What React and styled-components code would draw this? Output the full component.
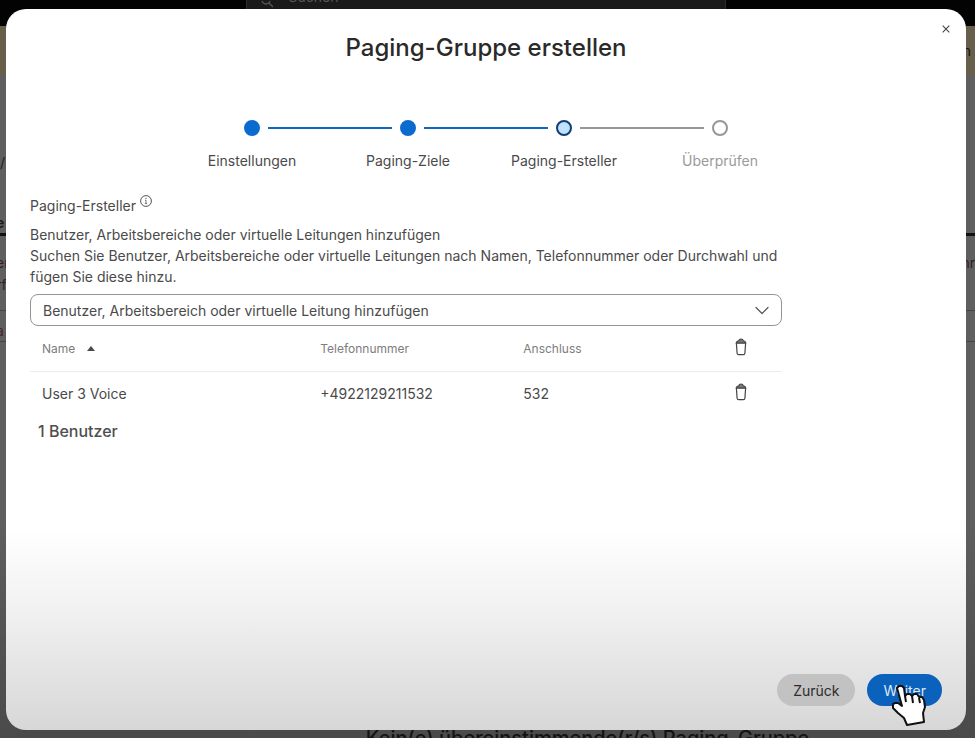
import React, { useState } from "react";
import styled, { createGlobalStyle } from "styled-components";

const GlobalStyle = createGlobalStyle`
  * {
    box-sizing: border-box;
  }
  body {
    margin: 0;
    overflow: hidden;
    background: #5b5b5b;
    color: #4a4a4a;
    font-family: Inter, "Liberation Sans", sans-serif;
    font-size: 14px;
  }
`;

/* page behind the dialog */

const Page = styled.div`
  height: 100vh;
  overflow: hidden;
  display: flex;
  flex-direction: column;
  background: linear-gradient(#5f5f5f 70%, #4a4a4a);
`;

const TopBar = styled.header`
  flex: none;
  height: 26px;
  display: flex;
  justify-content: center;
  background: #030303;
`;

const SearchBox = styled.div`
  width: 480px;
  height: 16px;
  margin-right: 4px;
  padding-left: 14px;
  display: flex;
  align-items: flex-end;
  gap: 16px;
  border: 1px solid #2c2c2c;
  border-top: 0;
  background: #1a1a1a;
  color: #555;
  line-height: 20px;
`;

const SearchText = styled.span`
  height: 28px;
`;

const Banner = styled.div`
  flex: none;
  height: 49px;
  display: flex;
  align-items: center;
  justify-content: flex-end;
  padding-right: 4px;
  background: #675e4c;
  color: #15120c;
`;

const PageLine = styled.div`
  flex: none;
  display: flex;
  align-items: flex-end;
  justify-content: space-between;
  height: ${({ $height }) => $height}px;
  line-height: 20px;
  color: ${({ $color }) => $color || "#1c1c1c"};
  font-weight: ${({ $bold }) => ($bold ? 700 : 400)};
  border-bottom: ${({ $border }) => $border || "0"};
`;

const ScrolledText = styled.span`
  margin-left: -4px;
`;

const EmptyText = styled.p`
  margin: auto 0 -14px;
  padding-left: 200px;
  text-align: center;
  font-size: 20px;
  font-weight: 500;
  line-height: 28px;
  color: #131313;
`;

/* dialog */

const Overlay = styled.div`
  position: fixed;
  inset: 0;
  display: flex;
  padding: 9px 9px 8px 6px;
`;

const Dialog = styled.section`
  flex: 1;
  position: relative;
  display: flex;
  flex-direction: column;
  padding: 25px 24px 24px;
  border-radius: 20px;
  background: linear-gradient(#fff 72%, #f0f0f0 84%, #d7d7d7);
`;

const Title = styled.h1`
  margin: 0;
  text-align: center;
  font-size: 24px;
  font-weight: 450;
  line-height: 28px;
  color: #2a2a2a;
`;

const IconButton = styled.button`
  display: inline-flex;
  padding: 0;
  border: 0;
  background: none;
  color: #444;
  cursor: pointer;
`;

const CloseButton = styled(IconButton)`
  position: absolute;
  top: 16px;
  right: 16px;
`;

const Steps = styled.ol`
  display: flex;
  justify-content: center;
  margin: 58px 0 0;
  padding: 0;
  list-style: none;
`;

const Step = styled.li`
  width: 156px;
  text-align: center;
  line-height: 20px;
  color: ${({ $state }) => ($state === "todo" ? "#9a9a9a" : "#4a4a4a")};
`;

const StepTrack = styled.div`
  display: flex;
  align-items: center;
  gap: 8px;
  margin-bottom: 15px;
`;

const StepLine = styled.span`
  flex: 1;
  height: 2px;
  background: ${({ $color }) => $color};
`;

const dotColors = {
  done: { fill: "#0c6bcf", border: "#0c6bcf" },
  current: { fill: "#bfe2ff", border: "#133c75" },
  todo: { fill: "#fff", border: "#979797" },
};

const StepDot = styled.span`
  width: 16px;
  height: 16px;
  border-radius: 50%;
  border: 2px solid ${({ $state }) => dotColors[$state].border};
  background: ${({ $state }) => dotColors[$state].fill};
`;

const Content = styled.div`
  flex: 1;
  width: 100%;
  max-width: 752px;
`;

const SectionTitle = styled.h2`
  display: flex;
  gap: 4px;
  margin: 24px 0 7px;
  font-size: 14px;
  font-weight: 400;
  line-height: 22px;
`;

const Label = styled.label`
  display: block;
  line-height: 21px;
`;

const Hint = styled.p`
  margin: 0 0 7px;
  line-height: 21px;
`;

const SelectWrap = styled.div`
  display: grid;
  align-items: center;
  margin-bottom: 1px;

  > * {
    grid-area: 1 / 1;
  }
  > svg {
    justify-self: end;
    margin-right: 12px;
    pointer-events: none;
  }
`;

const Select = styled.select`
  appearance: none;
  width: 100%;
  height: 32px;
  padding: 0 40px 0 12px;
  border: 1px solid #949494;
  border-radius: 8px;
  background: #fff;
  color: #4a4a4a;
  font: inherit;
`;

const Table = styled.table`
  width: 100%;
  table-layout: fixed;
  border-collapse: collapse;
  text-align: left;

  th,
  td {
    height: 44px;
    padding: 0 12px;
    font-weight: 400;
  }
  th {
    font-size: 12px;
    color: #7d7d7d;
    border-bottom: 1px solid #ededed;
  }
`;

const Column = styled.col`
  width: ${({ $width }) => $width};
`;

const SortButton = styled(IconButton)`
  align-items: center;
  gap: 12px;
  color: inherit;
  font: inherit;
`;

const Total = styled.p`
  margin: 6px 0 0 8px;
  font-size: 16px;
  font-weight: 450;
  line-height: 20px;
  color: #4f4f4f;
`;

const Footer = styled.footer`
  display: flex;
  justify-content: flex-end;
  gap: 12px;
`;

const Button = styled.button`
  position: relative;
  height: 32px;
  padding: 0 16px;
  border: 0;
  border-radius: 16px;
  font: inherit;
  background: ${({ $primary }) => ($primary ? "#0b62bd" : "#c2c2c2")};
  color: ${({ $primary }) => ($primary ? "#dfe9f4" : "#2e2a2c")};
`;

const Pointer = styled.svg`
  position: absolute;
  top: 10px;
  left: 24px;
`;

const CloseIcon = () => (
  <svg width="8" height="8" viewBox="0 0 8 8" stroke="currentColor" strokeWidth="1.1">
    <path d="M0.7 0.7l6.6 6.6M7.3 0.7L0.7 7.3" />
  </svg>
);

const InfoIcon = () => (
  <svg width="12" height="12" viewBox="0 0 12 12" fill="none" stroke="#555">
    <circle cx="6" cy="6" r="5.4" />
    <path d="M5 5.2h1v3.2M4.8 8.6h2.4" strokeWidth="0.8" />
    <circle cx="6" cy="3.4" r="0.6" fill="#555" stroke="none" />
  </svg>
);

const ChevronIcon = () => (
  <svg width="16" height="16" viewBox="0 0 16 16" fill="none" stroke="#555" strokeWidth="1.2" strokeLinecap="round" strokeLinejoin="round">
    <path d="M2 5.5l6 6 6-6" />
  </svg>
);

const TrashIcon = () => (
  <svg width="14" height="18" viewBox="0 0 14 18" fill="none" stroke="currentColor" strokeWidth="1.2" strokeLinejoin="round">
    <path d="M2.2 5.2q0-1.5 1.3-2l1.3-.5Q5.1 1 7 1t2.200 1.700l1.300.5q1.300.5 1.300 2z" fill="#777" />
    <path d="M2.400 5.300l.7 9.900q.1 1.500 1.500 1.500h4.800q1.400 0 1.500-1.500l.7-9.900" />
  </svg>
);

const steps = [
  { title: "Einstellungen", state: "done" },
  { title: "Paging-Ziele", state: "done" },
  { title: "Paging-Ersteller", state: "current" },
  { title: "Überprüfen", state: "todo" },
];

const users = [{ id: 1, name: "User 3 Voice", phone: "+4922129211532", extension: "532" }];

const lineColor = (step) => {
  if (!step) return "transparent";
  return step.state === "todo" ? "#979797" : "#1268bd";
};

function Stepper() {
  return (
    <Steps>
      {steps.map((step, idx) => (
        <Step key={step.title} $state={step.state}>
          <StepTrack>
            <StepLine $color={idx === 0 ? "transparent" : lineColor(step)} />
            <StepDot $state={step.state} />
            <StepLine $color={lineColor(steps[idx + 1])} />
          </StepTrack>
          {step.title}
        </Step>
      ))}
    </Steps>
  );
}

function UserTable({ users, onRemoved, onCleared }) {
  return (
    <Table>
      <colgroup>
        <Column $width="37%" />
        <Column $width="27%" />
        <Column $width="28%" />
        <Column $width="8%" />
      </colgroup>
      <thead>
        <tr>
          <th>
            <SortButton>
              Name
              <svg width="8" height="5" viewBox="0 0 8 5" fill="#4a4a4a">
                <path d="M4 0l4 5H0z" />
              </svg>
            </SortButton>
          </th>
          <th>Telefonnummer</th>
          <th>Anschluss</th>
          <th>
            <IconButton onClick={onCleared}>
              <TrashIcon />
            </IconButton>
          </th>
        </tr>
      </thead>
      <tbody>
        {users.map((user) => (
          <tr key={user.id}>
            <td>{user.name}</td>
            <td>{user.phone}</td>
            <td>{user.extension}</td>
            <td>
              <IconButton onClick={() => onRemoved(user.id)}>
                <TrashIcon />
              </IconButton>
            </td>
          </tr>
        ))}
      </tbody>
    </Table>
  );
}

function BackgroundPage() {
  return (
    <Page>
      <TopBar>
        <SearchBox>
          <svg width="12" height="14" viewBox="0 0 12 14" fill="none" stroke="#555" strokeWidth="1.4">
            <circle cx="5" cy="-1" r="4" />
            <path d="M8 2l4 4" />
          </svg>
          <SearchText>Suchen</SearchText>
        </SearchBox>
      </TopBar>
      <Banner>n</Banner>
      <PageLine $height={98}>/</PageLine>
      <PageLine $height={63} $bold $border="3px solid #111">
        <ScrolledText>e</ScrolledText>
      </PageLine>
      <PageLine $height={37} $color="#301f22">
        <ScrolledText>er</ScrolledText>
        <span>nr</span>
      </PageLine>
      <PageLine $height={22} $color="#301f22">
        <ScrolledText>rf</ScrolledText>
      </PageLine>
      <PageLine $height={16} $border="1px solid #444" />
      <PageLine $height={31} $color="#40292b" $border="1px solid #444">
        <ScrolledText>a</ScrolledText>
      </PageLine>
      <EmptyText>Kein(e) übereinstimmende(r/s) Paging-Gruppe</EmptyText>
    </Page>
  );
}

export default function App() {
  const [rows, setRows] = useState(users);

  return (
    <>
      <GlobalStyle />
      <BackgroundPage />
      <Overlay>
        <Dialog role="dialog" aria-labelledby="dialog-title">
          <CloseButton>
            <CloseIcon />
          </CloseButton>
          <Title id="dialog-title">Paging-Gruppe erstellen</Title>
          <Stepper />
          <Content>
            <SectionTitle>
              Paging-Ersteller
              <InfoIcon />
            </SectionTitle>
            <Label htmlFor="add-user">Benutzer, Arbeitsbereiche oder virtuelle Leitungen hinzufügen</Label>
            <Hint>
              Suchen Sie Benutzer, Arbeitsbereiche oder virtuelle Leitungen nach Namen, Telefonnummer oder
              Durchwahl und fügen Sie diese hinzu.
            </Hint>
            <SelectWrap>
              <Select id="add-user">
                <option>Benutzer, Arbeitsbereich oder virtuelle Leitung hinzufügen</option>
              </Select>
              <ChevronIcon />
            </SelectWrap>
            <UserTable
              users={rows}
              onRemoved={(id) => setRows(rows.filter((row) => row.id !== id))}
              onCleared={() => setRows([])}
            />
            <Total>{rows.length} Benutzer</Total>
          </Content>
          <Footer>
            <Button>Zurück</Button>
            <Button $primary>
              Weiter
              <Pointer width="36" height="42" viewBox="0 0 36 42" fill="#fff" stroke="#111" strokeWidth="2" strokeLinejoin="round">
                <path d="M6 4L8 2h3l2 2 1 8 2-2h3l2 2 2-2h3l2 3h3l2 3 1 7-2 6 1 9-17 3-3-7-6-5-5-5v-4l2-1h3l4 3z" />
                <path d="M14 12l1 6M21 12l1 7M28 14l1 5" />
              </Pointer>
            </Button>
          </Footer>
        </Dialog>
      </Overlay>
    </>
  );
}
